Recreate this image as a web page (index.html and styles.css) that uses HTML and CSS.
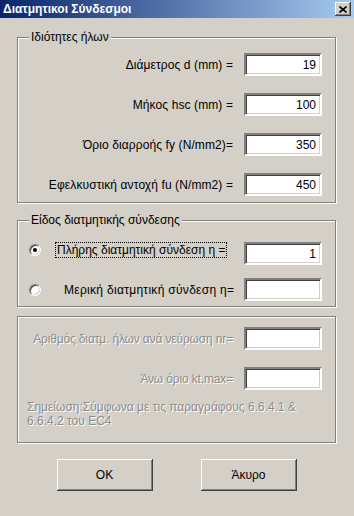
FILE: index.html
```html
<!DOCTYPE html>
<html lang="el">
<head>
<meta charset="utf-8">
<title>Διατμητικοι Σύνδεσμοι</title>
<link rel="stylesheet" href="styles.css">
</head>
<body>
<div class="window">
  <div class="titlebar">
    <span class="title">Διατμητικοι Σύνδεσμοι</span>
    <span class="close"><svg width="8" height="7" viewBox="0 0 8 7"><path d="M0.5 0.5 L7.5 6.5 M7.5 0.5 L0.5 6.5" stroke="#000" stroke-width="1.6" fill="none"/></svg></span>
  </div>

  <div class="content">
    <div class="group group-props">
      <div class="group-title">Ιδιότητες ήλων</div>
      <div class="rows">
        <div class="row"><span class="label">Διάμετρος d (mm) =</span><input class="field" type="text" value="19"></div>
        <div class="row"><span class="label">Μήκος hsc (mm) =</span><input class="field" type="text" value="100"></div>
        <div class="row"><span class="label">Όριο διαρροής fy (N/mm2)=</span><input class="field" type="text" value="350"></div>
        <div class="row"><span class="label">Εφελκυστική αντοχή fu (N/mm2) =</span><input class="field" type="text" value="450"></div>
      </div>
    </div>

    <div class="group group-type">
      <div class="group-title">Είδος διατμητικής σύνδεσης</div>
      <div class="rows">
        <div class="row option-row">
          <span class="radio checked"></span>
          <span class="option focused">Πλήρης διατμητική σύνδεση η =</span>
          <input class="field" type="text" value="1">
        </div>
        <div class="row option-row second">
          <span class="radio"></span>
          <span class="option">Μερική διατμητική σύνδεση η=</span>
          <input class="field" type="text" value="">
        </div>
      </div>
    </div>

    <div class="group group-ribs">
      <div class="rows">
        <div class="row"><span class="label disabled">Αριθμός διατμ. ήλων ανά νεύρωση nr=</span><input class="field" type="text" value=""></div>
        <div class="row"><span class="label disabled">Άνω όριο kt,max=</span><input class="field" type="text" value=""></div>
      </div>
      <p class="note disabled">Σημείωση:Σύμφωνα με τις παραγράφους 6.6.4.1 &amp;<br>6.6.4.2 του EC4</p>
    </div>

    <div class="buttons">
      <button class="btn">OK</button>
      <button class="btn">Άκυρο</button>
    </div>
  </div>
</div>
</body>
</html>
```

FILE: styles.css
```css
* { box-sizing: border-box; }
body { margin: 0; background: #d4d0c8; font: 12px/14px "Liberation Sans", Arial, sans-serif; color: #000; }
.window { width: 354px; height: 516px; overflow: hidden; }

.titlebar { height: 18px; display: flex; align-items: center; justify-content: space-between; padding: 0 3px 0 3px; background: linear-gradient(to right, #0a246a, #a6caf0); }
.title { color: #fff; font-weight: bold; font-size: 12px; }
.close { width: 16px; height: 14px; display: flex; align-items: center; justify-content: center; background: #d4d0c8; box-shadow: inset -1px -1px #404040, inset 1px 1px #fff, inset -2px -2px #808080; }
.close svg { display: block; }

.content { padding: 19px 18px 0 17px; }

.group { border: 1px solid #808080; box-shadow: inset 1px 1px #fff, 1px 1px #fff; padding: 0 13px 6px 0; }
.group-title { width: max-content; margin: -8px 0 0 11px; padding: 0 2px; background: #d4d0c8; }
.rows { display: flex; flex-direction: column; gap: 17px; }
.row { display: flex; align-items: center; justify-content: flex-end; gap: 11px; }
.label { white-space: nowrap; letter-spacing: 0.1px; }

.field { width: 78px; height: 23px; margin: 0; padding: 0 4px 0 2px; font: 12px "Liberation Sans", Arial, sans-serif; text-align: right; background: #fff; border: 2px solid; border-color: #808080 #fff #fff #808080; box-shadow: inset 1px 1px #404040, inset -1px -1px #d4d0c8; outline: none; }

.group-props .rows { padding-top: 9px; }

.group-type { margin-top: 17px; padding-bottom: 5px; }
.group-type .rows { padding-top: 15px; gap: 13px; }
.option-row { justify-content: flex-start; align-items: flex-start; gap: 0; }
.option-row .field { margin-left: auto; }
.option-row.second { align-items: center; }
.radio { width: 12px; height: 12px; margin: 2px 0 0 11px; border-radius: 50%; background: #fff; border: 1px solid; border-color: #808080 #fff #fff #808080; box-shadow: inset 1px 1px #404040, inset -1px -1px #d4d0c8; display: flex; align-items: center; justify-content: center; }
.option-row.second .radio { margin-top: 0; }
.radio.checked::after { content: ""; width: 4px; height: 4px; border-radius: 50%; background: #000; }
.option { margin-left: 14px; padding: 0 1px; white-space: nowrap; border: 1px dotted transparent; }
.option.focused { border-color: #000; }
.option-row.second .option { margin-left: 21px; letter-spacing: 0.3px; }

.group-ribs { margin-top: 9px; padding-top: 10px; padding-bottom: 14px; }
.disabled { color: #8c8c8c; text-shadow: 1px 1px #fff; }
.label.disabled { letter-spacing: -0.15px; }
.note { margin: 10px 0 0 9px; }

.buttons { display: flex; justify-content: center; gap: 48px; margin-top: 16px; }
.btn { width: 96px; height: 32px; margin: 0; padding: 0; font: 12px "Liberation Sans", Arial, sans-serif; color: #000; background: #d4d0c8; border: none; box-shadow: inset -1px -1px #404040, inset 1px 1px #fff, inset -2px -2px #808080; }
```
